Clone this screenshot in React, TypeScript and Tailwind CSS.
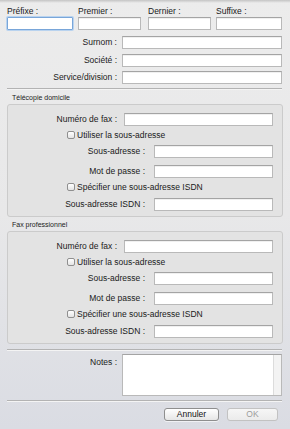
import React from "react";

const inputCls =
  "h-[13px] bg-white border border-[#b9b9b9] border-t-[#a4a4a4] shadow-[inset_0_1px_0_rgba(0,0,0,0.06)]";

function Label({ children, w }: { children: React.ReactNode; w: string }) {
  return (
    <div className={`${w} shrink-0 text-right leading-[13px] text-[#1a1a1a]`}>{children}</div>
  );
}

function Check({ label }: { label: string }) {
  return (
    <div className="flex items-center h-[12px] ml-[59px]">
      <div className="w-[8px] h-[8px] rounded-[2px] border border-[#8f8f8f] bg-gradient-to-b from-white to-[#e4e4e4] shrink-0" />
      <span className="ml-[2px] leading-[12px] text-[#1a1a1a]">{label}</span>
    </div>
  );
}

function Group({ title }: { title: string }) {
  return (
    <div>
      <div className="ml-[12px] text-[7px] leading-[9px] text-[#222] h-[14px] flex items-end pb-[2px]">
        {title}
      </div>
      <div className="mx-[7px] w-[276px] rounded-[3px] border border-[#cbcbcb] bg-[#e3e3e3] pt-[8px] pb-[6px]">
        <div className="flex items-center h-[12px]">
          <Label w="w-[109px]">Numéro de fax :</Label>
          <div className={`${inputCls} ml-[7px] w-[149px] h-[12px]`} />
        </div>
        <div className="mt-[4px]">
          <Check label="Utiliser la sous-adresse" />
        </div>
        <div className="flex items-center h-[12px] mt-[4px]">
          <Label w="w-[137px]">Sous-adresse :</Label>
          <div className={`${inputCls} ml-[9px] w-[119px] h-[12px]`} />
        </div>
        <div className="flex items-center h-[12px] mt-[8px]">
          <Label w="w-[137px]">Mot de passe :</Label>
          <div className={`${inputCls} ml-[9px] w-[119px] h-[12px]`} />
        </div>
        <div className="mt-[4px]">
          <Check label="Spécifier une sous-adresse ISDN" />
        </div>
        <div className="flex items-center h-[12px] mt-[5px]">
          <Label w="w-[137px]">Sous-adresse ISDN :</Label>
          <div className={`${inputCls} ml-[9px] w-[119px] h-[12px]`} />
        </div>
      </div>
    </div>
  );
}

function Sep() {
  return <div className="mx-[7px] w-[275px] border-t border-[#b3b3b3] border-b border-b-[#f4f4f4]" />;
}

export default function App() {
  return (
    <div className="w-[290px] h-[429px] overflow-hidden bg-gradient-to-b from-[#ececec] via-[#e8e8e9] to-[#dadce3] font-['Liberation_Sans',Arial,sans-serif] text-[8.5px] text-[#1a1a1a] relative">
      <div className="h-[3px] bg-gradient-to-b from-[#c4c4c4] to-transparent" />
      {/* top name row */}
      <div className="flex pt-[2px]">
        <div className="ml-[7px] w-[66px]">
          <div className="h-[12px] leading-[12px]">Préfixe :</div>
          <div className="h-[13px] bg-white border border-[#79a6d9] shadow-[0_0_0_1px_#b9d3ef] rounded-[1px]" />
        </div>
        <div className="ml-[5px] w-[63px]">
          <div className="h-[12px] leading-[12px]">Premier :</div>
          <div className={`${inputCls}`} />
        </div>
        <div className="ml-[7px] w-[63px]">
          <div className="h-[12px] leading-[12px]">Dernier :</div>
          <div className={`${inputCls}`} />
        </div>
        <div className="ml-[5px] w-[66px]">
          <div className="h-[12px] leading-[12px]">Suffixe :</div>
          <div className={`${inputCls}`} />
        </div>
      </div>
      <div className="flex items-center mt-[6px] h-[12px]">
        <Label w="w-[117px]">Surnom :</Label>
        <div className={`${inputCls} ml-[5px] w-[160px] h-[12px]`} />
      </div>
      <div className="flex items-center mt-[6px] h-[12px]">
        <Label w="w-[117px]">Société :</Label>
        <div className={`${inputCls} ml-[5px] w-[160px] h-[12px]`} />
      </div>
      <div className="flex items-center mt-[5px] h-[12px]">
        <Label w="w-[117px]">Service/division :</Label>
        <div className={`${inputCls} ml-[5px] w-[160px] h-[12px]`} />
      </div>
      <div className="mt-[5px]">
        <Sep />
      </div>
      <Group title="Télécopie domicile" />
      <div className="mt-[0px]">
        <Group title="Fax professionnel" />
      </div>
      <div className="mt-[5px]">
        <Sep />
      </div>
      <div className="flex mt-[3px]">
        <div className="w-[117px] text-right pt-[2px] leading-[12px]">Notes :</div>
        <div className="ml-[5px] w-[160px] h-[42px] bg-white border border-[#b9b9b9] border-t-[#a4a4a4] flex justify-end">
          <div className="w-[8px] h-full bg-[#f3f3f3] border-l border-[#dcdcdc]" />
        </div>
      </div>
      <div className="mt-[4px]">
        <Sep />
      </div>
      <div className="flex mt-[6px]">
        <div className="ml-[164px] w-[55px] h-[13px] rounded-[3px] border border-[#8e8e8e] bg-gradient-to-b from-white to-[#e6e6e6] flex items-center justify-center leading-[11px] text-[#111] shadow-[0_1px_0_rgba(255,255,255,0.6)]">
          Annuler
        </div>
        <div className="ml-[8px] w-[51px] h-[13px] rounded-[3px] border border-[#c2c2c2] bg-gradient-to-b from-[#f6f6f6] to-[#ebebeb] flex items-center justify-center leading-[11px] text-[#9c9c9c]">
          OK
        </div>
      </div>
    </div>
  );
}
